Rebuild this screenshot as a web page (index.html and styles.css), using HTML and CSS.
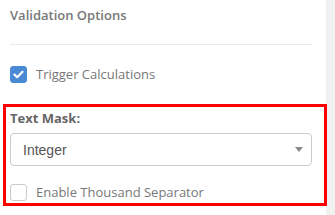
FILE: index.html
```html
<!DOCTYPE html>
<html lang="en">
<head>
    <meta charset="UTF-8">
    <title>Validation Options</title>
    <link rel="stylesheet" href="styles.css">
</head>
<body>
    <div class="page">
        <div class="panel">
            <h2 class="panel-title">Validation Options</h2>
            <hr class="divider">

            <label class="check-row">
                <span class="check-box checked">
                    <svg width="11" height="9" viewBox="0 0 11 9"><path d="M1.5 4.6 L4.2 7.2 L9.5 1.8" fill="none" stroke="#fff" stroke-width="2.2" stroke-linecap="round" stroke-linejoin="round"/></svg>
                </span>
                <span class="check-label">Trigger Calculations</span>
            </label>

            <div class="mask-group">
                <div class="field-label">Text Mask:</div>
                <div class="select-box">
                    <span class="select-value">Integer</span>
                    <span class="select-arrow"></span>
                </div>
                <label class="check-row check-row-small">
                    <span class="check-box"></span>
                    <span class="check-label">Enable Thousand Separator</span>
                </label>
            </div>
        </div>
        <div class="side"></div>
    </div>
</body>
</html>
```

FILE: styles.css
```css
/* base */
body {
    margin: 0;
    background: #fff;
    font-family: "Open Sans", "Liberation Sans", sans-serif;
}
.page {
    display: flex;
    height: 215px;
}
.panel {
    width: 326px;
    flex: none;
    position: relative;
    z-index: 1;
}
.side {
    flex: 1;
    background: #f1f1f1;
}

/* heading */
.panel-title {
    margin: 0;
    padding: 5px 0 0 10px;
    font-size: 13px;
    font-weight: 600;
    line-height: 20px;
    color: #777;
}
.divider {
    margin: 19px 14px 0 10px;
    border: none;
    border-top: 1px solid #eaeaea;
}

/* checkboxes */
.check-row {
    display: flex;
    align-items: center;
    gap: 9px;
    height: 20px;
    margin: 19px 0 0 10px;
}
.check-box {
    width: 15px;
    height: 15px;
    border: 1px solid #ccc;
    border-radius: 3px;
    background: #fff;
    display: flex;
    align-items: center;
    justify-content: center;
    flex: none;
}
.check-box.checked {
    background: #4a89d4;
    border-color: #4a89d4;
}
.check-label {
    font-size: 13px;
    line-height: 20px;
    color: #777;
}

/* text mask block */
.mask-group {
    margin: 20px -1px 0 3px;
    border: 3px solid #ff0000;
    padding: 1px 12px 1px 4px;
}
.field-label {
    font-size: 13px;
    font-weight: 700;
    line-height: 20px;
    color: #666;
}
.select-box {
    margin-top: 5px;
    height: 31px;
    border: 1px solid #ccc;
    border-radius: 4px;
    display: flex;
    align-items: center;
    justify-content: space-between;
    padding: 0 8px 0 12px;
}
.select-value {
    font-family: "Liberation Sans", Arial, sans-serif;
    font-size: 14px;
    color: #555;
}
.select-arrow {
    width: 0;
    height: 0;
    border-left: 4px solid transparent;
    border-right: 4px solid transparent;
    border-top: 5px solid #888;
}
.check-row-small {
    margin: 16px 0 0 0;
}
```
